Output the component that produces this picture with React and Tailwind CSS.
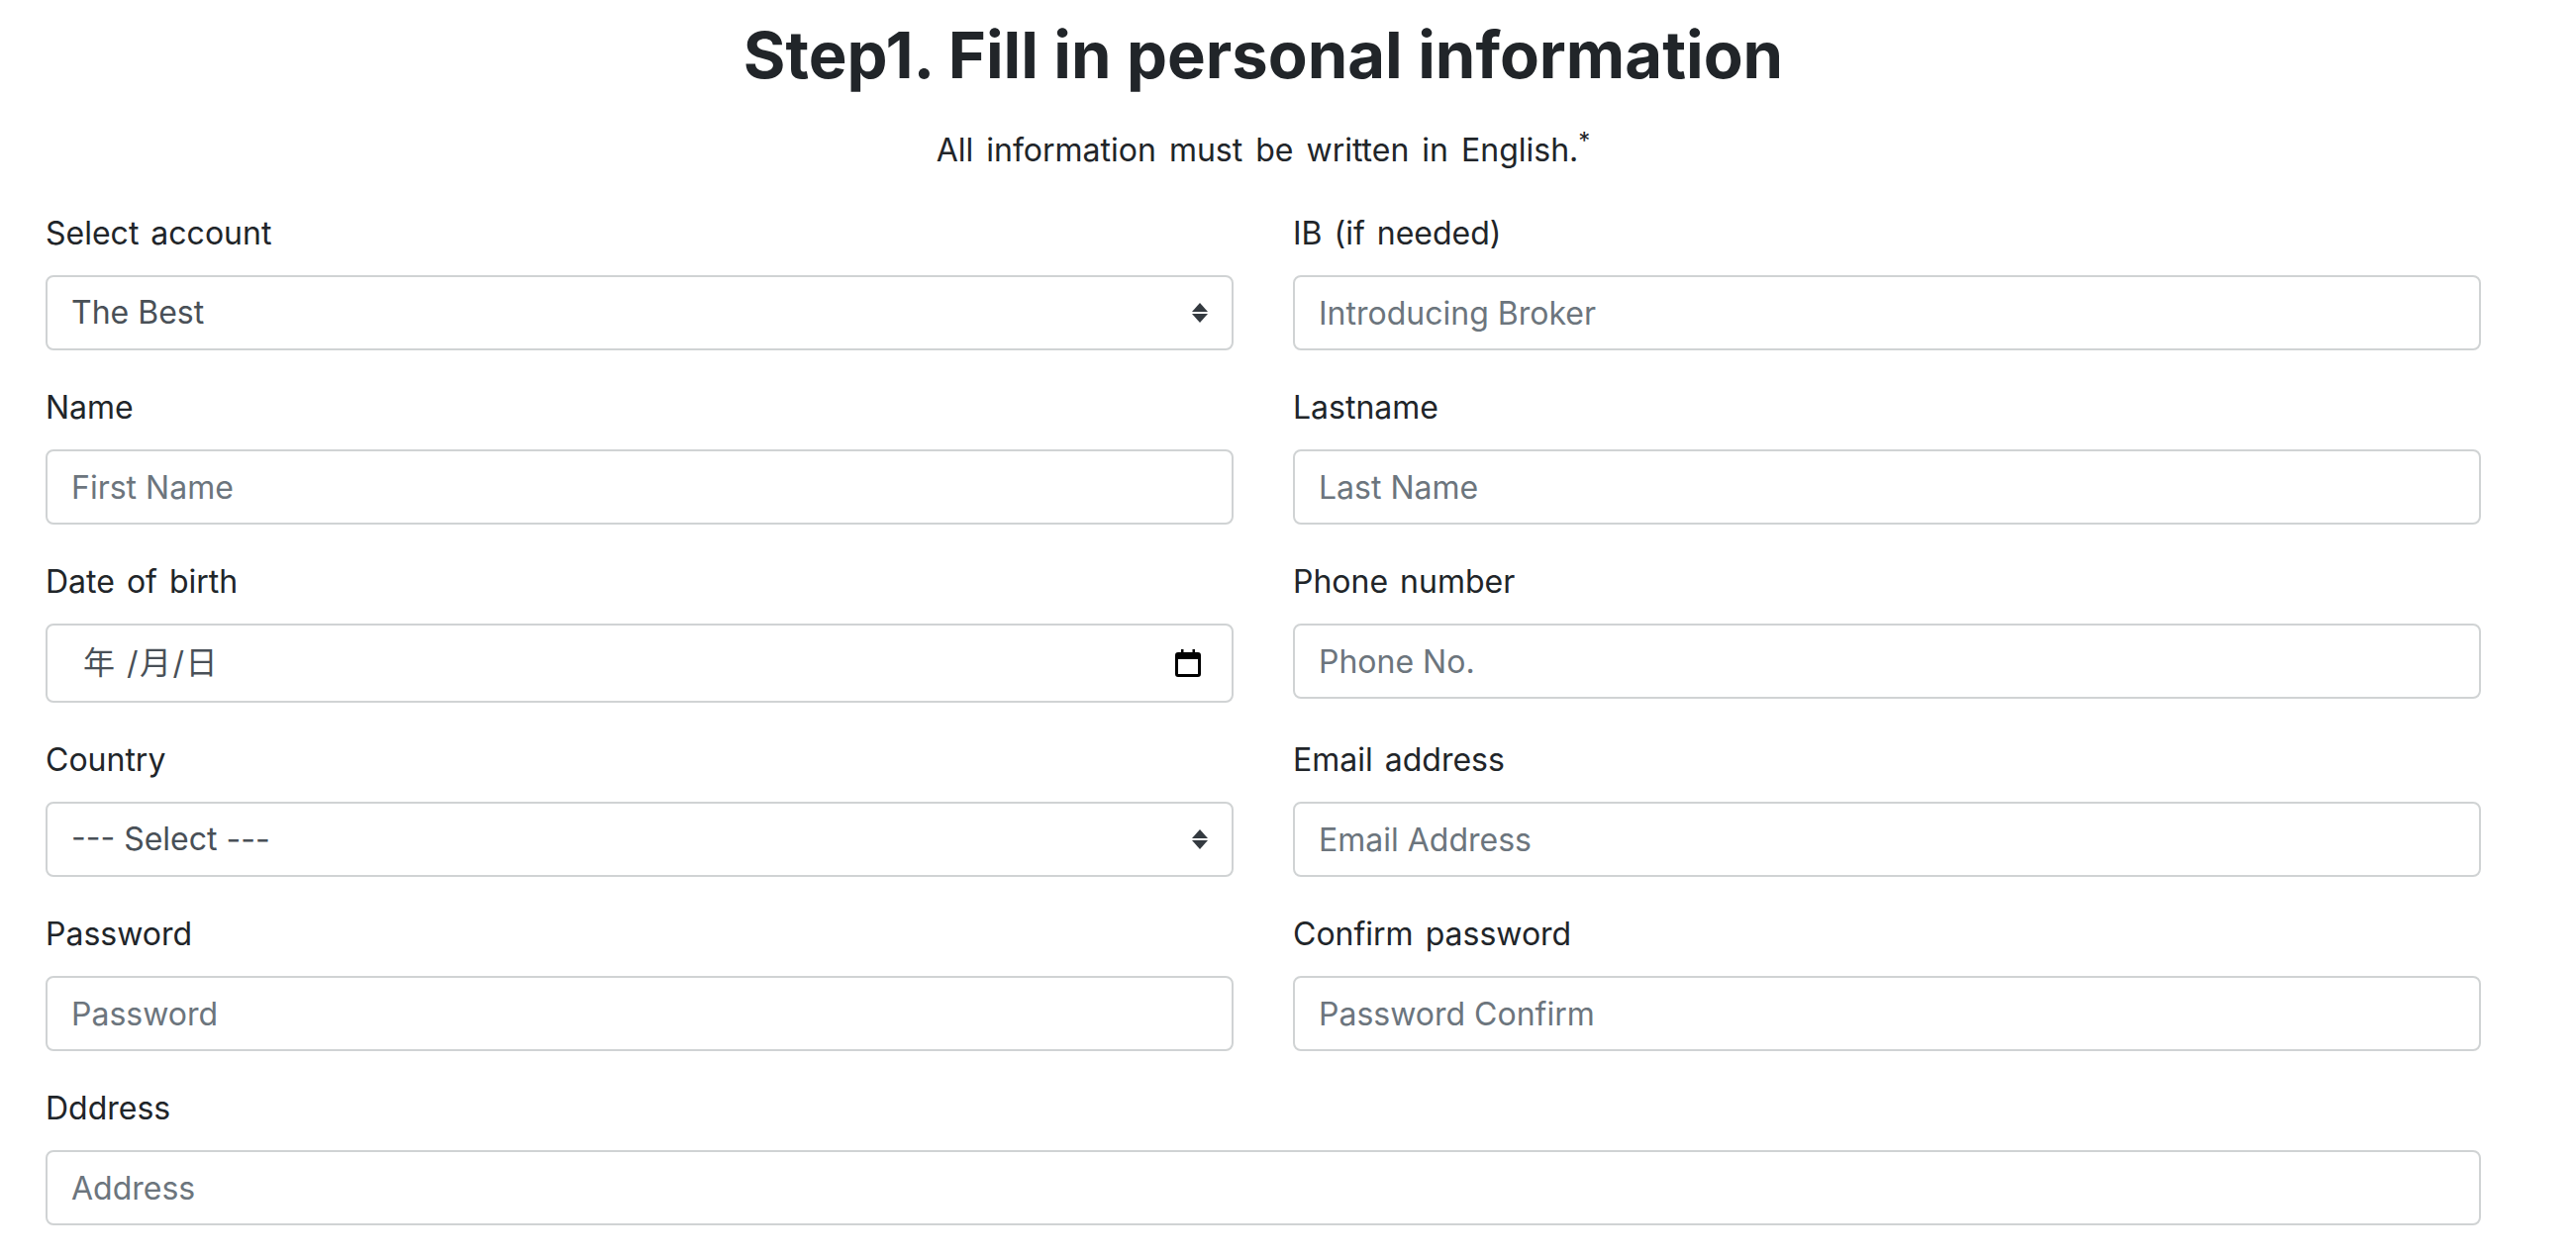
const sans = "font-['Inter','Noto_Sans_CJK_SC',sans-serif]";

function Field({ label, children, className = "" }) {
  return (
    <div className={"flex min-w-0 flex-col " + className}>
      <label className="mb-[18px] block h-[48px] text-[32px] leading-[48px] text-[#212529] [word-spacing:3px]">{label}</label>
      {children}
    </div>
  );
}

const boxClass =
  "block h-[76px] w-full rounded-[8px] border-2 border-solid border-[#d0d3d4] bg-white px-[24px] text-[32px] text-[#495057] outline-none placeholder:text-[#6c757d]";

function TextInput({ placeholder }) {
  return <input type="text" placeholder={placeholder} className={boxClass} />;
}

function Select({ value }) {
  return (
    <div className="relative">
      <select defaultValue={value} className={boxClass + " appearance-none"}>
        <option>{value}</option>
      </select>
      <svg className="pointer-events-none absolute right-[26px] top-[28px] h-[20px] w-[16px]" viewBox="0 0 16 20" fill="#343a40">
        <path d="M8 0l8 9H0z" />
        <path d="M8 20l8-9H0z" />
      </svg>
    </div>
  );
}

function DateInput() {
  return (
    <div className="flex h-[80px] w-full items-center justify-between rounded-[8px] border-2 border-solid border-[#d0d3d4] bg-white pl-[36px] pr-[31px] text-[32px] text-[#495057]">
      <span className="whitespace-pre tracking-[1.5px]">年 /月/日</span>
      <svg className="h-[28px] w-[26px]" viewBox="0 0 26 28">
        <path d="M6 0h2.5v3h9V0H20v3h3a3 3 0 0 1 3 3v19a3 3 0 0 1-3 3H3a3 3 0 0 1-3-3V6a3 3 0 0 1 3-3h3zM3 10v15h20V10z" fill="#000" />
      </svg>
    </div>
  );
}

export default function App() {
  return (
    <div className={"min-h-[1270px] bg-white pt-[16px] " + sans}>
      <div className="w-[2552px]">
        <h2 className="text-center text-[65.15px] font-bold leading-[80px] text-[#212529]">Step1. Fill in personal information</h2>
        <p className="mt-[32px] text-center text-[32px] leading-[48px] text-[#212529] [word-spacing:4px]">
          All information must be written in English.<sup className="text-[24px]">*</sup>
        </p>
      </div>
      <form className="mx-[46px] mt-[36px] grid w-[2460px] grid-cols-2 gap-x-[60px] gap-y-[34px]">
        <Field label="Select account"><Select value="The Best" /></Field>
        <Field label="IB (if needed)"><TextInput placeholder="Introducing Broker" /></Field>
        <Field label="Name"><TextInput placeholder="First Name" /></Field>
        <Field label="Lastname"><TextInput placeholder="Last Name" /></Field>
        <Field label="Date of birth"><DateInput /></Field>
        <Field label="Phone number"><TextInput placeholder="Phone No." /></Field>
        <Field label="Country"><Select value="--- Select ---" /></Field>
        <Field label="Email address"><TextInput placeholder="Email Address" /></Field>
        <Field label="Password"><TextInput placeholder="Password" /></Field>
        <Field label="Confirm password"><TextInput placeholder="Password Confirm" /></Field>
        <Field label="Dddress" className="col-span-2"><TextInput placeholder="Address" /></Field>
      </form>
    </div>
  );
}
